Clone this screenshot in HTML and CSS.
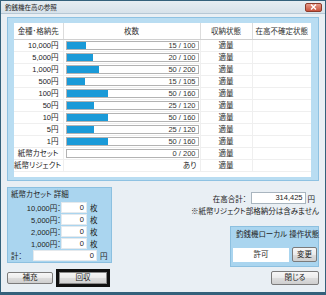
FILE: index.html
```html
<!doctype html>
<html lang="ja">
<head>
	<meta charset="UTF-8" />
	<title>釣銭機在高の参照</title>
<link rel="stylesheet" href="styles.css">
</head>
<body>
	<div class="win">
		<div class="titlebar">
			<span class="title">釣銭機在高の参照</span>
			<span class="close">
				<svg width="7" height="6" viewBox="0 0 7 6"><path d="M1 0.5 L6 5.5 M6 0.5 L1 5.5" stroke="#fff" stroke-width="1.4"/></svg>
			</span>
		</div>
		<div class="main">
			<div class="panel">
				<div class="grid">
					<table>
						<colgroup>
							<col class="c1"><col class="c2"><col class="c3"><col class="c4">
						</colgroup>
						<thead>
							<tr><th>金種･格納先</th><th>枚数</th><th>収納状態</th><th>在高不確定状態</th></tr>
						</thead>
						<tbody>
							<tr><td class="lbl">10,000円</td><td class="cnt"><div class="bar"><div class="fill" style="width:15%"></div><span>15 / 100</span></div></td><td class="st">適量</td><td></td></tr>
							<tr><td class="lbl">5,000円</td><td class="cnt"><div class="bar"><div class="fill" style="width:20%"></div><span>20 / 100</span></div></td><td class="st">適量</td><td></td></tr>
							<tr><td class="lbl">1,000円</td><td class="cnt"><div class="bar"><div class="fill" style="width:25%"></div><span>50 / 200</span></div></td><td class="st">適量</td><td></td></tr>
							<tr><td class="lbl">500円</td><td class="cnt"><div class="bar"><div class="fill" style="width:14.3%"></div><span>15 / 105</span></div></td><td class="st">適量</td><td></td></tr>
							<tr><td class="lbl">100円</td><td class="cnt"><div class="bar"><div class="fill" style="width:31.3%"></div><span>50 / 160</span></div></td><td class="st">適量</td><td></td></tr>
							<tr><td class="lbl">50円</td><td class="cnt"><div class="bar"><div class="fill" style="width:20.8%"></div><span>25 / 120</span></div></td><td class="st">適量</td><td></td></tr>
							<tr><td class="lbl">10円</td><td class="cnt"><div class="bar"><div class="fill" style="width:31.3%"></div><span>50 / 160</span></div></td><td class="st">適量</td><td></td></tr>
							<tr><td class="lbl">5円</td><td class="cnt"><div class="bar"><div class="fill" style="width:20.8%"></div><span>25 / 120</span></div></td><td class="st">適量</td><td></td></tr>
							<tr><td class="lbl">1円</td><td class="cnt"><div class="bar"><div class="fill" style="width:31.3%"></div><span>50 / 160</span></div></td><td class="st">適量</td><td></td></tr>
							<tr><td class="lbl">紙幣カセット</td><td class="cnt"><div class="bar"><div class="fill" style="width:0%"></div><span>0 / 200</span></div></td><td class="st">適量</td><td></td></tr>
							<tr><td class="lbl">紙幣リジェクト</td><td class="cnt plain">あり</td><td class="st">適量</td><td></td></tr>
						</tbody>
					</table>
				</div>
			</div>

			<div class="lower">
				<div class="left">
					<div class="cassette">
						<div class="box-title">紙幣カセット 詳細</div>
						<div class="crows">
							<div class="crow"><span class="clbl">10,000円：</span><span class="inp cin">0</span><span class="unit">枚</span></div>
							<div class="crow"><span class="clbl">5,000円：</span><span class="inp cin">0</span><span class="unit">枚</span></div>
							<div class="crow"><span class="clbl">2,000円：</span><span class="inp cin">0</span><span class="unit">枚</span></div>
							<div class="crow"><span class="clbl">1,000円：</span><span class="inp cin">0</span><span class="unit">枚</span></div>
							<div class="crow"><span class="slbl">計：</span><span class="inp sin">0</span><span class="unit">円</span></div>
						</div>
					</div>
					<div class="btns">
						<button class="btn b-add">補充</button>
						<button class="btn b-def">回収</button>
					</div>
				</div>

				<div class="right">
					<div class="total"><span>在高合計：</span><span class="inp tot">314,425</span><span class="unit2">円</span></div>
					<div class="note">※紙幣リジェクト部格納分は含みません</div>
					<div class="opbox">
						<div class="box-title">釣銭機ローカル 操作状態</div>
						<div class="oprow"><span class="perm">許可</span><button class="btn b-chg">変更</button></div>
					</div>
					<button class="btn b-close">閉じる</button>
				</div>
			</div>
		</div>
	</div>
</body>
</html>
```

FILE: styles.css
```css
*{
	margin: 0;
	padding: 0;
	box-sizing: border-box;
}
body{
	font-family: "Liberation Sans", "Noto Sans CJK JP", sans-serif;
	font-size: 7.5px;
	color: #222;
	font-feature-settings: "palt";
	background: #fff;
}
.win{
	width: 326px;
	height: 295px;
	border: 1px solid #34617b;
	border-bottom-width: 3px;
	background: #e9eff4;
}
.titlebar{
	height: 13px;
	display: flex;
	align-items: center;
	justify-content: space-between;
	padding: 0 3px 0 4px;
	background: linear-gradient(#e6edf2, #d7e2ea);
	border-bottom: 1px solid #b7c8d5;
}
.title{
	font-size: 6.5px;
	color: #222;
}
.close{
	width: 17px;
	height: 9px;
	display: flex;
	align-items: center;
	justify-content: center;
	border: 1px solid #8d3b2b;
	border-radius: 2px;
	background: linear-gradient(#e79a88, #c9533d);
}

.main{
	padding: 3px 6px 0 6px;
}
.panel{
	height: 164px;
	background: #b9ddf2;
	border: 1px solid #8fc2e2;
	padding: 5px 7px 3px 6px;
}
.grid{
	height: 154px;
	background: #fff;
}
table{
	width: 297px;
	border-collapse: collapse;
	table-layout: fixed;
}
col.c1{ width: 49px; }
col.c2{ width: 137px; }
col.c3{ width: 52px; }
col.c4{ width: 59px; }
th{
	height: 16px;
	font-weight: normal;
	color: #333;
	border-right: 1px solid #dcdcdc;
	border-bottom: 1px solid #d0d0d0;
}
th:last-child{
	border-right: none;
}
td{
	height: 12px;
	padding: 0;
	line-height: 11px;
	border-right: 1px solid #efefef;
	border-bottom: 1px solid #efefef;
	white-space: nowrap;
}
td:last-child{
	border-right: none;
}
td.lbl{
	text-align: right;
	padding-right: 4px;
}
td.cnt{
	padding: 0 1px 0 2px;
}
td.plain{
	text-align: right;
	padding-right: 3px;
}
td.st{
	text-align: center;
}
.bar{
	height: 9px;
	display: grid;
	border: 1px solid #b3b3b3;
	background: #fff;
}
.bar .fill,
.bar span{
	grid-area: 1 / 1;
}
.fill{
	height: 7px;
	background: #1a9ad8;
}
.bar span{
	justify-self: end;
	line-height: 7px;
	padding-right: 2px;
	color: #333;
}

.lower{
	display: flex;
	justify-content: space-between;
	margin-top: 6px;
}
.left{
	width: 105px;
}
.cassette{
	height: 76px;
	background: #aad5ef;
	border: 1px solid #8cc0e0;
	padding: 2px 0 0 3px;
}
.box-title{
	height: 9px;
	line-height: 9px;
	white-space: nowrap;
}
.crows{
	margin-top: 3px;
	display: flex;
	flex-direction: column;
	gap: 1px;
}
.crow{
	display: flex;
	align-items: center;
	height: 11px;
}
.clbl{
	width: 50px;
	text-align: right;
}
.slbl{
	width: 22px;
}
.inp{
	height: 11px;
	line-height: 9px;
	background: #fff;
	border: 1px solid #e4e9ed;
	text-align: right;
	padding-right: 2px;
}
.cin{
	width: 26px;
}
.sin{
	width: 64px;
}
.unit{
	margin-left: 3px;
}
.btns{
	display: flex;
	align-items: center;
	gap: 3px;
	margin-top: 6px;
}
.btn{
	font: inherit;
	color: #222;
	height: 12px;
	line-height: 10px;
	border: 1px solid #7b7b7b;
	border-radius: 2px;
	background: linear-gradient(#f7f7f7 0%, #ebebeb 50%, #dddddd 51%, #cfcfcf 100%);
}
.b-add{
	width: 46px;
}
.b-def{
	width: 54px;
	height: 18px;
	border: 3px solid #111;
	border-radius: 0;
	box-shadow: inset 0 0 0 1px #8a8a8a;
}

.right{
	width: 112px;
	display: flex;
	flex-direction: column;
	align-items: flex-end;
	padding-top: 5px;
}
.total{
	display: flex;
	align-items: center;
	height: 12px;
	padding-right: 4px;
}
.tot{
	width: 55px;
	height: 12px;
	line-height: 10px;
	margin-left: 4px;
	border-color: #a9b5bf;
}
.unit2{
	margin-left: 2px;
}
.note{
	margin-top: 3px;
	height: 10px;
	line-height: 10px;
	white-space: nowrap;
}
.opbox{
	margin-top: 9px;
	width: 89px;
	background: #aad5ef;
	border: 1px solid #8cc0e0;
	padding: 3px 1px 4px 2px;
}
.opbox .box-title{
	padding-left: 3px;
}
.oprow{
	display: flex;
	align-items: center;
	gap: 3px;
	margin-top: 8px;
	height: 15px;
}
.perm{
	width: 56px;
	height: 14px;
	line-height: 14px;
	text-align: center;
	background: #fff;
}
.b-chg{
	width: 25px;
	height: 15px;
}
.b-close{
	margin-top: 4px;
	width: 48px;
	height: 14px;
}
```
